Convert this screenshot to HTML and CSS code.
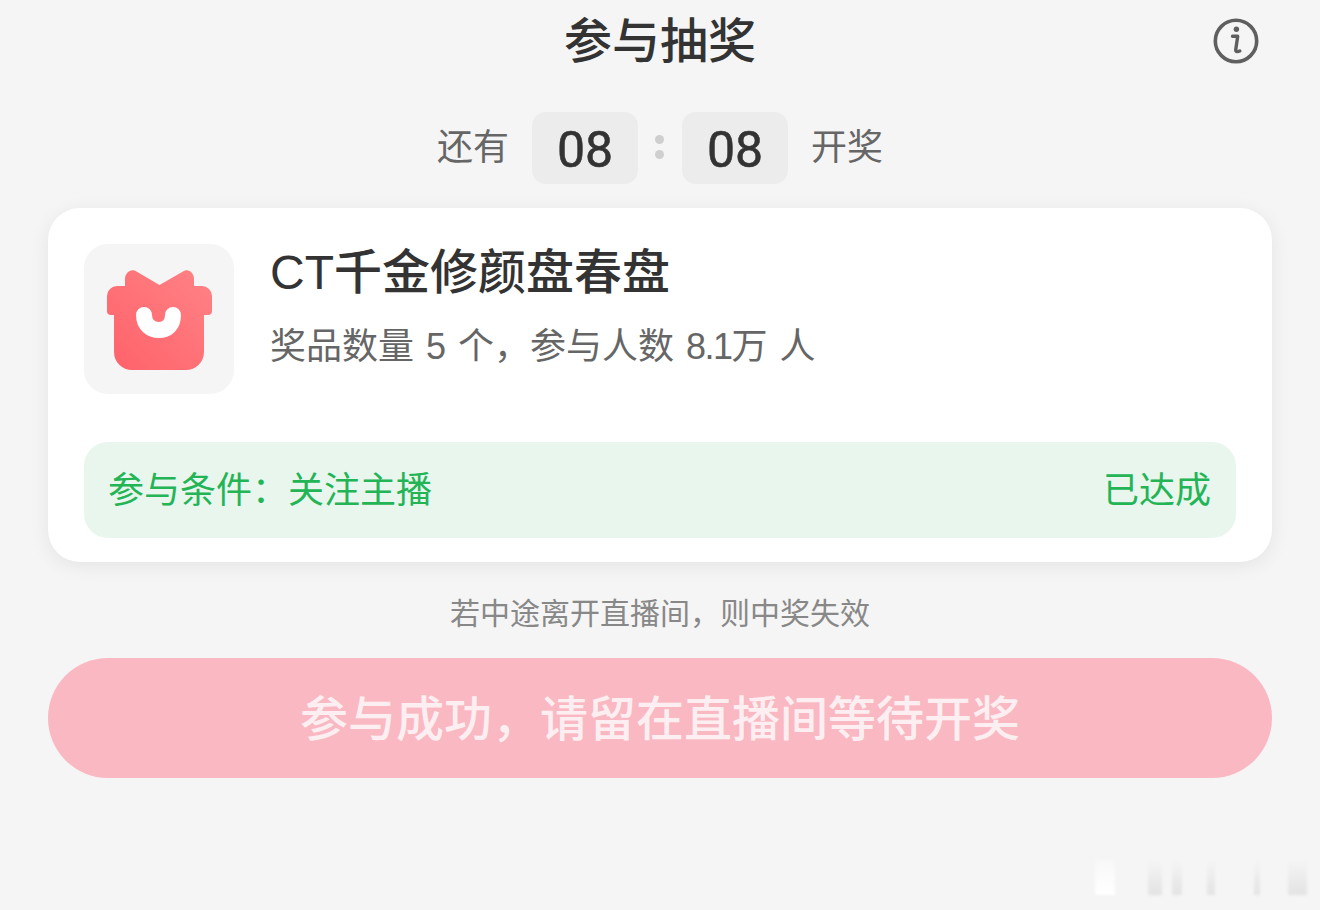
FILE: index.html
```html
<!DOCTYPE html>
<html lang="zh-CN">
<head>
  <meta charset="UTF-8" />
  <title>参与抽奖</title>
  <link rel="stylesheet" href="styles.css">
</head>
<body>
  <div class="page">
    <header class="top">
      <h1>参与抽奖</h1>
      <svg class="info" width="46" height="46" viewBox="0 0 46 46" fill="none">
        <circle cx="23" cy="23" r="20.7" stroke="#5f5f5f" stroke-width="3.6"/>
        <circle cx="23.4" cy="11.2" r="2.7" fill="#5f5f5f"/>
        <path d="M19.5 18.2h5.2l-1.900 13c-.4 2.400 1.200 2.900 4 1.800" stroke="#5f5f5f" stroke-width="3.4" stroke-linecap="round" stroke-linejoin="round"/>
      </svg>
    </header>

    <div class="timer">
      <span class="timer-label">还有</span>
      <span class="digit">08</span>
      <span class="colon"><i></i><i></i></span>
      <span class="digit">08</span>
      <span class="timer-label">开奖</span>
    </div>

    <section class="card">
      <div class="prize">
        <div class="prize-icon">
          <svg width="106" height="102" viewBox="0 0 106 102">
            <defs>
              <linearGradient id="giftFill" x1="1" y1="0" x2="0" y2="1">
                <stop offset="0" stop-color="#ff8386"/>
                <stop offset="1" stop-color="#ff6169"/>
              </linearGradient>
            </defs>
            <path d="M18 16V9c0-6 6-11 11.500-7.500L52.500 15 76 1.500C81.500-2 87 3 87 9v7h8a10 10 0 0 1 10 10v15a4 4 0 0 1-4 4h-4v37a18 18 0 0 1-18 18H25A18 18 0 0 1 7 82V45H4a4 4 0 0 1-4-4V26a10 10 0 0 1 10-10z" fill="url(#giftFill)"/>
            <path d="M37 45c0 10 7 15 15 15s14-5 14-15" fill="none" stroke="#fff" stroke-width="16" stroke-linecap="round"/>
          </svg>
        </div>
        <div class="prize-info">
          <h2>CT千金修颜盘春盘</h2>
          <p>奖品数量 5 个，参与人数 <span class="num">8.1</span>万 人</p>
        </div>
      </div>
      <div class="condition">
        <span>参与条件：关注主播</span>
        <span>已达成</span>
      </div>
    </section>

    <p class="note">若中途离开直播间，则中奖失效</p>
    <button class="join" type="button"><span>参与成功，请留在直播间等待开奖</span></button>

    <div class="watermark"><i class="w1"></i><i class="w2"></i><i class="w3"></i><i class="w4"></i><i class="w5"></i><i class="w6"></i></div>
  </div>
</body>
</html>
```

FILE: styles.css
```css
* {
  margin: 0;
  padding: 0;
  box-sizing: border-box;
}

body {
  background: #f5f5f5;
  font-family: "Liberation Sans", "Noto Sans CJK SC", sans-serif;
  color: #333;
}

.page {
  position: relative;
  height: 910px;
  padding: 0 48px;
  overflow: hidden;
}

.top {
  position: relative;
  height: 80px;
  display: flex;
  justify-content: center;
  align-items: center;
}

h1 {
  font-size: 48px;
  font-weight: 500;
  line-height: 80px;
  padding-top: 4px;
  color: #333;
}

.info {
  position: absolute;
  right: 13px;
  top: 18px;
}

.timer {
  margin-top: 32px;
  height: 72px;
  display: flex;
  justify-content: center;
  align-items: center;
  gap: 26px;
}

.timer-label {
  font-size: 36px;
  color: #666;
  margin: -8px -3px 0;
}

.digit {
  width: 106px;
  height: 72px;
  border-radius: 14px;
  background: #ececec;
  font-family: "Roboto", "Liberation Sans", sans-serif;
  font-size: 50px;
  font-weight: 400;
  line-height: 77px;
  text-align: center;
  color: #333;
  -webkit-text-stroke: 0.6px #333;
}

.colon {
  width: 10px;
  margin: -2px -9px 0;
  display: flex;
  flex-direction: column;
  gap: 6px;
}

.colon i {
  width: 9px;
  height: 9px;
  border-radius: 50%;
  background: #cfcfcf;
}

.card {
  margin-top: 24px;
  height: 354px;
  padding: 36px 36px 24px;
  background: #fff;
  border-radius: 32px;
  box-shadow: 0 4px 20px rgba(0, 0, 0, 0.07);
}

.prize {
  display: flex;
  gap: 36px;
}

.prize-icon {
  width: 150px;
  height: 150px;
  flex: none;
  display: flex;
  justify-content: center;
  align-items: center;
  background: #f5f5f5;
  border-radius: 24px;
}

.prize-icon svg {
  margin: 4px 0 0 1px;
}

h2 {
  font-size: 48px;
  font-weight: 500;
  line-height: 56px;
  margin-top: 1px;
  color: #333;
}

.prize-info p {
  margin-top: 24px;
  font-size: 36px;
  line-height: 44px;
  word-spacing: 2px;
  color: #666;
}

.num {
  letter-spacing: -1.500px;
}

.condition {
  margin-top: 48px;
  height: 96px;
  padding: 0 25px 6px 24px;
  display: flex;
  justify-content: space-between;
  align-items: center;
  background: #e9f6ee;
  border-radius: 24px;
  font-size: 36px;
  color: #22b455;
}

.note {
  margin-top: 32px;
  font-size: 30px;
  line-height: 40px;
  text-align: center;
  color: #888;
}

.join {
  display: block;
  width: 100%;
  height: 120px;
  margin-top: 24px;
  padding-bottom: 6px;
  border: none;
  border-radius: 60px;
  background: #f9b8c2;
  font-family: inherit;
  font-size: 48px;
  font-weight: 500;
  color: #fdeff1;
}

/* 右下角水印，原图里就是模糊的竖条 */
.watermark {
  position: absolute;
  left: 0;
  top: 860px;
  width: 100%;
  height: 35px;
}

.watermark i {
  position: absolute;
  top: 0;
  height: 35px;
  background: linear-gradient(to bottom, rgba(0, 0, 0, 0), rgba(0, 0, 0, 0.07));
  filter: blur(1.500px);
}

.watermark .w1 { left: 1095px; width: 20px; background: linear-gradient(to bottom, rgba(255, 255, 255, 0.3), #fff); }
.watermark .w2 { left: 1148px; width: 14px; }
.watermark .w3 { left: 1172px; width: 10px; }
.watermark .w4 { left: 1207px; width: 8px; }
.watermark .w5 { left: 1254px; width: 6px; }
.watermark .w6 { left: 1288px; width: 19px; }
```
